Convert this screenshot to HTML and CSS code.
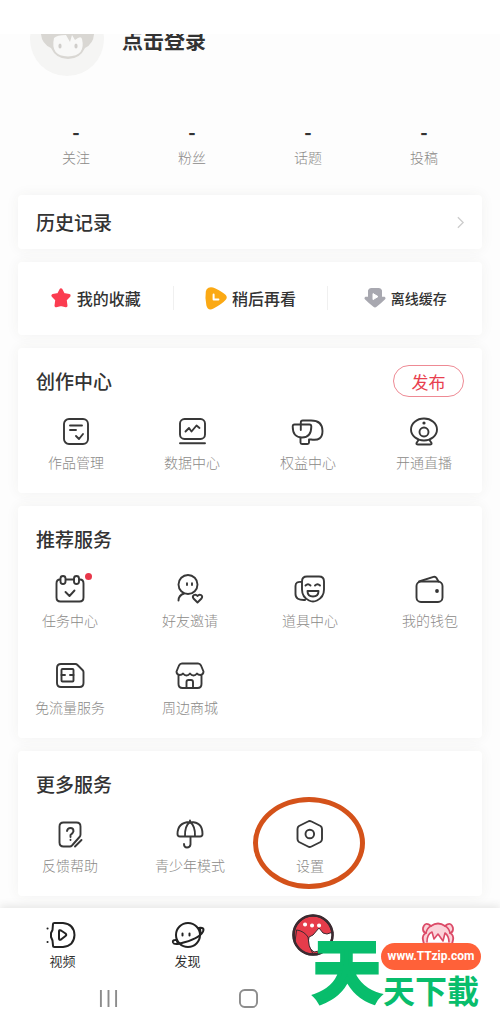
FILE: index.html
```html
<!DOCTYPE html>
<html lang="zh-CN">
<head>
    <meta charset="UTF-8">
    <meta name="viewport" content="width=device-width, initial-scale=1.0">
    <title>我的</title>
    <link rel="stylesheet" href="styles.css">
</head>
<body>
  <div class="status-bar"></div>

  <header class="profile">
    <a class="user" href="#">
      <svg class="avatar" viewBox="0 0 74 74" aria-hidden="true">
        <circle cx="37" cy="37" r="37" fill="#f5f5f4"/>
        <path d="M11 28Q13 16 27 20Q37 10 47 20Q61 16 64 28Q65 41 55 46Q50 57 38 57Q26 57 21 46Q10 41 11 28Z" fill="#d9d7d3"/>
        <path d="M24 36Q27 33 36 33L40 40L42 33L45 38Q51 33 52 37Q56 54 38 54.500Q20 54 24 36Z" fill="#f8f8f7"/>
        <ellipse cx="30" cy="44" rx="1.600" ry="2.500" fill="#d0cecb"/>
        <ellipse cx="46" cy="44" rx="1.600" ry="2.500" fill="#d0cecb"/>
      </svg>
      <span class="user-name">点击登录</span>
    </a>
    <div class="stats">
      <a class="stat" href="#"><b>-</b><span>关注</span></a>
      <a class="stat" href="#"><b>-</b><span>粉丝</span></a>
      <a class="stat" href="#"><b>-</b><span>话题</span></a>
      <a class="stat" href="#"><b>-</b><span>投稿</span></a>
    </div>
  </header>

  <main class="cards">
    <a class="card history" href="#">
      <span class="card-title">历史记录</span>
      <svg class="arrow" viewBox="0 0 8 14"><path d="M1 1l6 6-6 6"/></svg>
    </a>

    <section class="card shortcuts">
      <a class="shortcut" href="#">
        <svg viewBox="0 0 22 22"><path d="M11 2.800l2.600 4.800 5.500 1-3.900 4.100.8 6-5-1.100-5 1.100.8-6-3.900-4.100 5.500-1z" fill="#fb3c50" stroke="#fb3c50" stroke-width="3" stroke-linejoin="round"/></svg>
        <span>我的收藏</span>
      </a>
      <a class="shortcut" href="#">
        <svg viewBox="0 0 22 22"><path d="M3.500 .8Q6-.8 10.500 1.400Q18 5 20.500 7.800Q23 10.500 20.500 13Q17 17 8.500 21.500Q3 24.500 1.400 18.500Q-.2 11 .8 4.500Q1.200 1.800 3.500 .8Z" fill="#fba914"/><path d="M8.600 7.400v5.200h4.800" fill="none" stroke="#fff" stroke-width="2" stroke-linecap="round" stroke-linejoin="round"/></svg>
        <span>稍后再看</span>
      </a>
      <a class="shortcut small" href="#">
        <svg viewBox="0 0 22 22"><path d="M7 1h8Q17.500 1 18 3.500v6.200h2.600Q22.500 11 20.600 12.800Q17 16.500 12.600 19.800Q11 21 9.400 19.800Q5 16.500 1.400 12.800Q-.5 11 1.400 9.700H4V3.500Q4.500 1 7 1Z" fill="#a8a8b0"/><path d="M9 6.600v6l5-3z" fill="#fff" stroke="#fff" stroke-width="1" stroke-linejoin="round"/></svg>
        <span>离线缓存</span>
      </a>
    </section>

    <section class="card">
      <div class="card-head">
        <h2 class="card-title">创作中心</h2>
        <button class="publish" type="button">发布</button>
      </div>
      <div class="grid">
        <a class="item" href="#">
          <svg viewBox="0 0 30 30"><rect x="3" y="3" width="24" height="25" rx="5"/><path d="M9 9.500h12M9 14h6M15 20l3 3 4-5"/></svg>
          <span>作品管理</span>
        </a>
        <a class="item" href="#">
          <svg viewBox="0 0 30 30"><rect x="3" y="3" width="25" height="20" rx="4.500"/><path d="M3 27.300h25M8.500 15.500l3.500-3.500 2.500 3.500 5-6 3 2.500"/></svg>
          <span>数据中心</span>
        </a>
        <a class="item" href="#">
          <svg viewBox="0 0 30 30"><path d="M1.500 8.500h15q1.800 0 1.800 2Q18.300 21.500 9 21.500Q-.3 21.500-.3 10.500q0-2 1.800-2zM7.800 14V6.500q0-2 2-2H18q11.500 0 11.500 10.500T18 23.500h-2v3q0 1.500-1.500 1.500H9q-1.500 0-1.500-1.500v-5"/></svg>
          <span>权益中心</span>
        </a>
        <a class="item" href="#">
          <svg viewBox="0 0 30 30"><ellipse cx="15" cy="13.500" rx="13" ry="11"/><circle cx="15" cy="16" r="4.500"/><circle class="dot" cx="15" cy="7" r="1.600"/><path d="M9.500 24l-2 3q-.5 1.500 1.500 1.500h12q2 0 1.500-1.500l-2-3"/></svg>
          <span>开通直播</span>
        </a>
      </div>
    </section>

    <section class="card">
      <div class="card-head">
        <h2 class="card-title">推荐服务</h2>
      </div>
      <div class="grid wide">
        <a class="item" href="#">
          <svg viewBox="0 0 30 30"><path d="M5 5.500Q1.500 5.500 1.500 9.500v14q0 4 4 4h19q4 0 4-4v-14q0-4-3.500-4M11 5.500h8M10.500 18l4 4 5-5.500"/><rect x="5.500" y="2" width="5" height="8" rx="2.500"/><rect x="19" y="2" width="5" height="8" rx="2.500"/></svg>
          <span>任务中心</span>
          <i class="badge"></i>
        </a>
        <a class="item" href="#">
          <svg viewBox="0 0 30 30"><circle cx="13" cy="10.500" r="9.500"/><path d="M3.500 26.500q0-5 5.500-7M22.500 28.500l-4-4q-1.500-2 .5-3.500 2-1 3.500 1 1.500-2 3.500-1 2 1.500.5 3.500z"/><path d="M12 9.200v1.800M17 9.200v1.800"/></svg>
          <span>好友邀请</span>
        </a>
        <a class="item" href="#">
          <svg viewBox="0 0 30 30"><path d="M12 2.500h12q5 0 5 5v8q0 7.500-7 11-4 2-8 0-7-3.500-7-11v-8q0-5 5-5zM7 8Q.5 7 .5 12v8q0 6.500 9.500 6"/><path d="M10.500 11.500q2.500-2.500 5 0M20 11.500q2.500-2.500 5 0M12.500 17h11q0 5.500-5.500 5.500T12.500 17z"/></svg>
          <span>道具中心</span>
        </a>
        <a class="item" href="#">
          <svg viewBox="0 0 30 30"><rect x="1.500" y="7.500" width="26" height="20.500" rx="4.500"/><path d="M4 7.500l14.500-4.700q2-.5 3 1.200l2 3.500"/><circle class="dot" cx="22" cy="17" r="1.900"/></svg>
          <span>我的钱包</span>
        </a>
        <a class="item" href="#">
          <svg viewBox="0 0 30 30"><path d="M6 3h14.500q1 0 2 1l5 5q1 1 1 2v11q0 4-4 4H6q-4 0-4-4V7q0-4 4-4z"/><rect x="6.500" y="8" width="12" height="12.500" rx="1"/><path d="M6.500 14h3.500M15 14h3.500"/></svg>
          <span>免流量服务</span>
        </a>
        <a class="item" href="#">
          <svg viewBox="0 0 30 30"><path d="M7 2.500h16q2 0 3 2l2.500 6q0 3-3 3.500-2.500 0-3.500-1.500-1.500 2-3.500 2t-3.500-2q-1.500 2-3.500 2t-3.500-2q-1 1.500-3.500 1.500-3-.5-3-3.500L4 4.500q1-2 3-2zM3.500 14.500V23q0 4 4 4h15q4 0 4-4v-8.500M11.500 27v-6q0-2 2-2h2.500q2 0 2 2v6"/></svg>
          <span>周边商城</span>
        </a>
      </div>
    </section>

    <section class="card">
      <div class="card-head">
        <h2 class="card-title">更多服务</h2>
      </div>
      <div class="grid wide">
        <a class="item" href="#">
          <svg viewBox="0 0 30 30"><path d="M15 27.500H8.500q-4 0-4-4v-16q0-4 4-4h13q4 0 4 4v8q0 1.500-1 2.500l-7.500 8.500q-1 1-2 1zM20 27.500l6.500-6.500"/><path d="M12 12q.5-3 3.500-3t3 3.200q-.5 1.800-3 3.800v2M15.500 20.700v.3"/></svg>
          <span>反馈帮助</span>
        </a>
        <a class="item" href="#">
          <svg viewBox="0 0 30 30"><path d="M2.500 15Q2.500 3.500 15 3t12.500 12q0 2.500-2.500 2.500H5q-2.500 0-2.500-2.500zM15 1.500V3M10 17.500Q9.500 7 15 3q5.500 4 5 14.500M15.500 17.500v8q-.5 3-3.500 3-3 0-3-3.500"/></svg>
          <span>青少年模式</span>
        </a>
        <a class="item" href="#">
          <svg viewBox="0 0 30 30"><path d="M13 2.500q1.500-1 3.500 0l9 4.500q1.500 1 1.500 3v10q0 2-1.500 3l-9 4.500q-2 1-3.500 0l-9-4.500Q2.500 22 2.500 20V10q0-2 1.500-3z"/><circle cx="14.800" cy="15" r="4.300"/></svg>
          <span>设置</span>
          <i class="ring"></i>
        </a>
      </div>
    </section>
  </main>

  <footer class="footer">
    <nav class="tabs">
      <a class="tab" href="#">
        <svg viewBox="0 0 30 30"><path d="M5 4q0-1 1.500-1H15q11 1 11.500 12Q26 26 15 27H6.500Q5 27 5 25.500l-.5-5L3 17v-4l1.500-3zM11 11.500q0-2 2-1l4.500 3q1.500 1.500 0 2.500L13 19.500q-2 1-2-1z"/><path d="M-.5 8.500h.1M-.5 22h.1"/></svg>
        <span>视频</span>
      </a>
      <a class="tab" href="#">
        <svg viewBox="0 0 30 30"><circle cx="15" cy="15" r="12"/><path d="M4 20Q-1 19.500 0 22.500 1 25 7 23.500 26 19 30 11.500 32 7 25.500 8M4 20q-.5 3.500 4 3.500M26 8q2 2 1 5"/><path d="M9.500 13.500v2M16.500 13.500v2"/></svg>
        <span>发现</span>
      </a>
      <a class="tab center" href="#" aria-label="会员购">
        <svg viewBox="0 0 42 42">
          <circle cx="21" cy="21" r="19.500" fill="#e63c4b"/>
          <path d="M16 30l1-7 4-2 6-7 4 5 4 1 6-2q-1 10-7 15-6 5-12 5-5-3-6-8z" fill="#fff" stroke="#3b2a30" stroke-width="1"/>
          <path d="M5 16q7 1 11 7 0 9 5 17Q7 40 3 29z" fill="#e63c4b" stroke="#3b2a30" stroke-width="1"/>
          <circle cx="21" cy="21" r="19.500" fill="none" stroke="#3b2a30" stroke-width="2.500"/>
          <path d="M13 10.500h.1M20 11.500h.1M27 11.500h.1" fill="none" stroke="#fff" stroke-width="4" stroke-linecap="round"/>
        </svg>
      </a>
      <a class="tab mine" href="#" aria-label="我的">
        <svg viewBox="0 0 34 34">
          <path d="M10 4Q4-1 2 6q-.5 4 3 5-4 2-3 7 1 6 5 10h20q4-4 5-10 1-5-3-7 3.500-1 3-5-2-7-8-2-7-5-14 0z" fill="#fbd3da" stroke="#dc4b68" stroke-width="1.800"/>
          <path d="M6 20q0-8 5-10l2 7 4-5 5 7 2-8q4 3 4 9" fill="#fff" stroke="#dc4b68" stroke-width="1.600" stroke-linejoin="round"/>
          <path d="M10 4q-4 2-5 7M24 4q4 2 5 7" fill="none" stroke="#dc4b68" stroke-width="1.600"/>
        </svg>
      </a>
    </nav>

    <div class="system-bar">
      <button type="button" aria-label="最近任务"><svg viewBox="0 0 20 20"><path d="M2 1v18M10 1v18M18 1v18"/></svg></button>
      <button type="button" aria-label="主屏幕"><svg viewBox="0 0 20 20"><rect x="1" y="1" width="18" height="18" rx="5"/></svg></button>
      <button type="button" aria-label="返回"></button>
    </div>

    <div class="site-mark">
      <span class="mark-big">天</span>
      <div class="mark-side">
        <span class="mark-url">www.TTzip.com</span>
        <span class="mark-name">天下載</span>
      </div>
    </div>
  </footer>
</body>
</html>
```

FILE: styles.css
```css
* {
  box-sizing: border-box;
}
body {
  margin: 0;
  min-height: 100vh;
  display: flex;
  flex-direction: column;
  background: #fdfdfd;
  color: #333;
  font-family: "Noto Sans CJK SC", sans-serif;
  font-size: 14px;
  line-height: 20px;
}
a {
  color: inherit;
  text-decoration: none;
}
svg {
  display: block;
  overflow: visible;
}
.status-bar {
  height: 34px;
  background: #fff;
}

/* profile */
.profile {
  padding: 0 18px;
  overflow: hidden;
}
.user {
  display: flex;
  align-items: center;
  gap: 18px;
  margin-top: -32px;
  padding-left: 12px;
}
.avatar {
  width: 74px;
  height: 74px;
}
.user-name {
  font-size: 21px;
  font-weight: 700;
}
.stats {
  display: grid;
  grid-template-columns: repeat(4, 1fr);
  margin: 44px 0 27px;
}
.stat {
  display: flex;
  flex-direction: column;
  gap: 3px;
  padding-bottom: 1px;
  text-align: center;
  color: #8c8a88;
  font-weight: 300;
}
.stat b {
  color: #333;
  font-size: 20px;
  font-weight: 700;
  line-height: 24px;
}

/* cards */
.cards {
  display: flex;
  flex-direction: column;
  gap: 13px;
  padding: 0 18px 12px;
}
.card {
  background: #fff;
  border-radius: 4px;
  box-shadow: 0 0 14px rgba(60, 60, 50, 0.06);
  padding: 17px 0 21px;
}
.card-title {
  margin: 0;
  font-size: 19px;
  font-weight: 500;
  line-height: 32px;
}
.history {
  display: flex;
  align-items: center;
  justify-content: space-between;
  padding: 11px 18px;
}
.arrow {
  width: 7px;
  height: 13px;
  fill: none;
  stroke: #ccc;
  stroke-width: 1.5;
}
.shortcuts {
  display: grid;
  grid-template-columns: repeat(3, 1fr);
  padding: 24px 0 25px;
}
.shortcut {
  display: flex;
  align-items: center;
  justify-content: center;
  gap: 5px;
  height: 24px;
  font-size: 16px;
  font-weight: 500;
}
.shortcut + .shortcut {
  border-left: 1px solid #f0f0f0;
}
.shortcut svg {
  width: 22px;
  height: 22px;
}
.shortcut.small {
  font-size: 14px;
}
.card-head {
  display: flex;
  align-items: center;
  justify-content: space-between;
  padding: 0 18px;
}
.publish {
  width: 71px;
  height: 32px;
  padding: 0;
  border: 1px solid #ee8a94;
  border-radius: 16px;
  background: #fff;
  color: #e8404f;
  font-family: inherit;
  font-size: 17px;
}
.grid {
  display: grid;
  grid-template-columns: repeat(4, 1fr);
  row-gap: 31px;
  margin-top: 19px;
}
.grid.wide {
  margin-left: -8px;
  margin-right: -8px;
}
.item {
  position: relative;
  display: flex;
  flex-direction: column;
  align-items: center;
  gap: 6px;
  color: #8c8a88;
  font-weight: 300;
}
.item svg {
  width: 30px;
  height: 30px;
  fill: none;
  stroke: #383838;
  stroke-width: 1.9;
  stroke-linecap: round;
  stroke-linejoin: round;
}
.item .dot {
  fill: #333;
  stroke: none;
}
.badge {
  position: absolute;
  top: -1px;
  left: calc(50% + 15px);
  width: 7px;
  height: 7px;
  border-radius: 50%;
  background: #e8374a;
}
.ring {
  position: absolute;
  top: -22px;
  left: calc(50% - 57px);
  width: 112px;
  height: 92px;
  border: 5px solid #d4521a;
  border-radius: 50%;
}

/* bottom bars */
.footer {
  position: relative;
  flex: 1;
  background: #fff;
  box-shadow: 0 -2px 8px rgba(60, 60, 50, 0.12);
}
.tabs {
  display: grid;
  grid-template-columns: repeat(4, 1fr);
  height: 64px;
}
.tab {
  display: flex;
  flex-direction: column;
  align-items: center;
  gap: 1px;
  padding-top: 12px;
  font-size: 13px;
}
.tab svg {
  width: 30px;
  height: 30px;
  fill: none;
  stroke: #222;
  stroke-width: 2;
  stroke-linecap: round;
  stroke-linejoin: round;
}
.tab.center {
  padding-top: 6px;
}
.tab.center svg {
  width: 42px;
  height: 42px;
}
.tab.mine {
  padding-top: 14px;
}
.tab.mine svg {
  width: 34px;
  height: 34px;
}
.system-bar {
  display: grid;
  grid-template-columns: repeat(3, 1fr);
  height: 52px;
  padding: 0 42px 0 39px;
}
.system-bar button {
  display: flex;
  align-items: center;
  justify-content: center;
  padding: 0;
  border: 0;
  background: none;
}
.system-bar svg {
  width: 19px;
  height: 19px;
  fill: none;
  stroke: #8c8c8c;
  stroke-width: 2;
}

/* site mark */
.site-mark {
  position: absolute;
  top: 24px;
  right: 19px;
  display: flex;
  color: #08bd6c;
  font-weight: 700;
}
.mark-big {
  font-size: 68px;
  line-height: 72px;
  -webkit-text-stroke: 4px #08bd6c;
}
.mark-side {
  display: flex;
  flex-direction: column;
  padding-top: 11px;
}
.mark-url {
  border-radius: 14px;
  background: #ff6139;
  color: #fff;
  font-family: Roboto, sans-serif;
  font-size: 12px;
  font-weight: 700;
  line-height: 27px;
  text-align: center;
}
.mark-name {
  padding: 0 2px;
  font-size: 32px;
  line-height: 38px;
}
```
